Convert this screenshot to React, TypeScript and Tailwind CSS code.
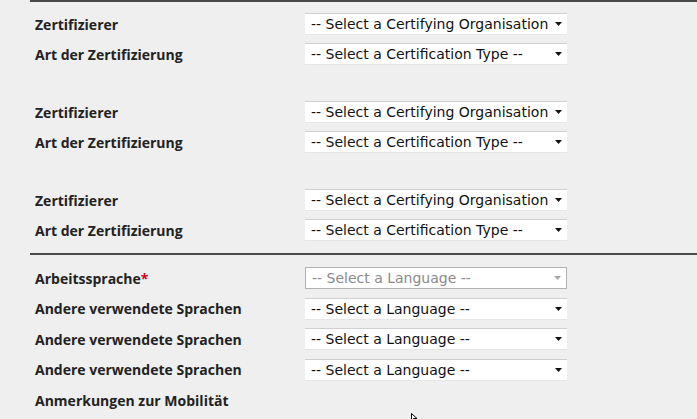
import React from "react";

type Row = { label: string; placeholder: string; required?: boolean; disabled?: boolean };

const certGroup: Row[] = [
  { label: "Zertifizierer", placeholder: "-- Select a Certifying Organisation" },
  { label: "Art der Zertifizierung", placeholder: "-- Select a Certification Type --" },
];

const languageRows: Row[] = [
  { label: "Arbeitssprache", placeholder: "-- Select a Language --", required: true, disabled: true },
  { label: "Andere verwendete Sprachen", placeholder: "-- Select a Language --" },
  { label: "Andere verwendete Sprachen", placeholder: "-- Select a Language --" },
  { label: "Andere verwendete Sprachen", placeholder: "-- Select a Language --" },
];

function FakeSelect({ placeholder, disabled }: { placeholder: string; disabled?: boolean }) {
  return (
    <div
      className={
        "flex h-[22px] w-[262px] items-center justify-between bg-white pl-[6px] pr-[5px] text-[14px] font-[family-name:DejaVu_Sans,Verdana,sans-serif] " +
        (disabled
          ? "border border-[#b3b3b3] text-[#8a8a8a]"
          : "border-t border-t-[#cfcfcf] border-b border-b-[#e6e6e6] text-[#111]")
      }
    >
      <span className="whitespace-nowrap leading-none">{placeholder}</span>
      <svg width="7" height="4" viewBox="0 0 7 4" className="shrink-0">
        <path d="M0 0h7L3.5 4z" fill={disabled ? "#a8a8a8" : "#111"} />
      </svg>
    </div>
  );
}

function FormRow({ row, tall }: { row: Row; tall?: boolean }) {
  return (
    <div className={"flex items-center " + (tall ? "h-[30.5px]" : "h-[30px]")}>
      <div className="w-[275px] pl-[5px] text-[14px] font-bold text-[#222] font-['Open_Sans',sans-serif]">
        {row.label}
        {row.required && <span className="text-[#d0021b]">*</span>}
      </div>
      {row.label !== "Anmerkungen zur Mobilität" && (
        <FakeSelect placeholder={row.placeholder} disabled={row.disabled} />
      )}
    </div>
  );
}

export default function App() {
  return (
    <div className="relative h-[419px] w-[697px] overflow-hidden bg-[#efefef]">
      <div className="ml-[30px] border-t-2 border-[#4a4a4a] pt-[7px]">
        {[0, 1, 2].map((g) => (
          <div key={g} className={g > 0 ? "mt-[28px]" : ""}>
            {certGroup.map((r) => (
              <FormRow key={r.label} row={r} />
            ))}
          </div>
        ))}
      </div>
      <div className="ml-[30px] mt-[8px] border-t-2 border-[#4a4a4a] pt-[8px]">
        {languageRows.map((r, i) => (
          <FormRow key={i} row={r} tall />
        ))}
        <FormRow row={{ label: "Anmerkungen zur Mobilität", placeholder: "" }} tall />
      </div>
      {/* mouse pointer tip peeking in at the bottom */}
      <svg className="absolute left-[411px] top-[413px]" width="8" height="8" viewBox="0 0 8 8">
        <path d="M0.5 0.5V7.5L2.5 5.5H6Z" fill="#fff" stroke="#000" strokeWidth="1" />
      </svg>
    </div>
  );
}
